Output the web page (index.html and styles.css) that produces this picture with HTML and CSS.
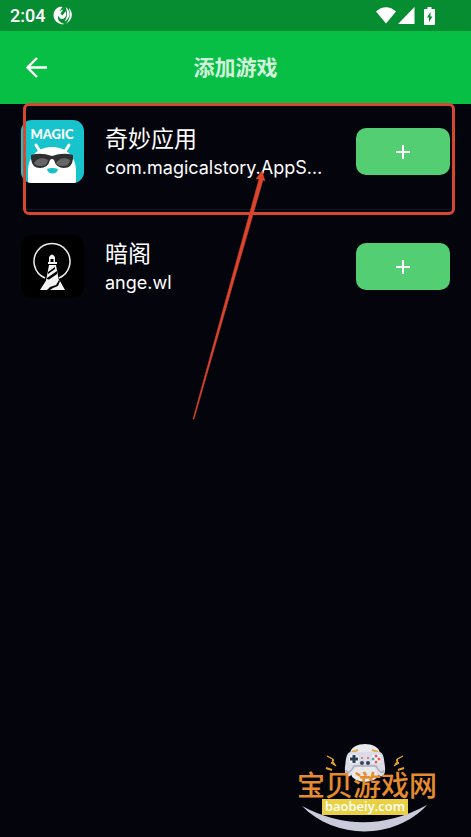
FILE: index.html
```html
<!DOCTYPE html>
<html lang="zh-CN">

<head>
  <meta charset="utf-8">
  <meta name="viewport" content="width=device-width, initial-scale=1">
  <title>添加游戏</title>
  <link rel="stylesheet" href="styles.css">
</head>

<body>

  <div class="status-bar">
    <span class="time">2:04</span>
    <svg class="notice" width="19" height="19" viewBox="0 0 18 18">
      <path d="M4 2C1 4-.3 8 1 11.500c1.500 4 6 6.500 10 5.500C6 16 4 13 5 9c1 3 3 4 5 3 3-2 3-5 2-7l-3 4-2-2 3-4-4 2 3-4C7 .5 5.500 1 4 2z" fill="#fff"/>
      <path d="M12 1c5 4 5 10-1 14 1-3 4-6 1-14zM15 2c5 5 3 12-3 15 4-4 5-9 3-15z" fill="#fff"/>
    </svg>
    <div class="signals">
      <svg width="20" height="17" viewBox="0 0 20 17"><path d="M0 4.500C6-1.200 14-1.200 20 4.500L10 16.500z" fill="#fff"/></svg>
      <svg width="17" height="17" viewBox="0 0 17 17"><path d="M0 17L16.500 0v17z" fill="#fff"/></svg>
      <svg class="battery" width="11" height="18" viewBox="0 0 11 18"><path fill-rule="evenodd" d="M3.500 0h4v2H10q1 0 1 1v14q0 1-1 1H1q-1 0-1-1V3q0-1 1-1h2.500zM6.500 5L3 10.500h2V15l3.500-5.500h-2z" fill="#fff"/></svg>
    </div>
  </div>

  <header class="top-bar">
    <button class="back" type="button" aria-label="返回">
      <svg width="21" height="21" viewBox="0 0 21 21"><path d="M11 1L1.500 10.500 11 20M1.500 10.500H21" fill="none" stroke="#fff" stroke-width="2.400"/></svg>
    </button>
    <h1>添加游戏</h1>
  </header>

  <main>
    <ul class="apps">
      <li class="app">
        <svg class="icon" viewBox="0 0 63 63">
          <rect width="63" height="63" fill="#17c4cc"/>
          <path d="M15 25l5 8M48 25l-5 8" stroke="#fff" stroke-width="3" stroke-linecap="round"/>
          <path d="M7 63V51C7 36 17 27 31 27s24 9 24 24v12z" fill="#fff"/>
          <path d="M10 35q10-3 21 1 11-4 21-1v4q-1 9-9 9-8 0-10-8-2-2-4 0-2 8-10 8-8 0-9-9z" fill="#2f2f31"/>
          <path d="M13 43c3-5 9-6 14-3-1 5-3 6-8 6-3 0-5-1-6-3zM35 43c3-5 9-6 14-3-1 5-3 6-8 6-3 0-5-1-6-3z" fill="#666"/>
          <path d="M26 49q5-2 11 0c-1 6-10 6-11 0z" fill="#17bfc7"/>
          <text class="icon-text" x="31" y="19" text-anchor="middle">MAGIC</text>
        </svg>
        <div class="info">
          <h2>奇妙应用</h2>
          <p class="package">com.magicalstory.AppS…</p>
        </div>
        <button class="add" type="button" aria-label="添加奇妙应用">
          <svg width="14" height="14" viewBox="0 0 14 14"><path d="M7 0v14M0 7h14" stroke="#fff" stroke-width="2"/></svg>
        </button>
      </li>
      <li class="app">
        <svg class="icon" viewBox="0 0 63 63">
          <rect width="63" height="63" fill="#000"/>
          <path d="M24 43A18 18 0 1 1 38 43" fill="none" stroke="#eee" stroke-width="1.500"/>
          <path d="M28 24v-2q3-5 6 0v2zM27 27h9v2h-9zM28 24h1.500v4H28zM32.500 24H34v4h-1.500zM28 30h7l3 16H25z" fill="#f2f2f2"/>
          <path d="M27 37l7-5v2l-7 5zM26 43l10-7v3l-10 7z" fill="#000"/>
          <path d="M19 55l7-11 3 1 6-3 4 4 5 9z" fill="#f2f2f2"/>
          <path d="M26 55l3-3 6-2 3-5 1 1-2 5-5 2-3 2z" fill="#000"/>
        </svg>
        <div class="info">
          <h2>暗阁</h2>
          <p class="package">ange.wl</p>
        </div>
        <button class="add" type="button" aria-label="添加暗阁">
          <svg width="14" height="14" viewBox="0 0 14 14"><path d="M7 0v14M0 7h14" stroke="#fff" stroke-width="2"/></svg>
        </button>
      </li>
    </ul>

    <!-- highlight of the first row -->
    <div class="highlight"></div>
    <svg class="arrow" width="74" height="250" viewBox="0 0 74 250">
      <path d="M70 1l3 10-2-1L2 249H1L67 9l-3 0z" fill="#db452e" stroke="#db452e" stroke-width=".5"/>
    </svg>
  </main>

  <svg class="watermark" width="165" height="102" viewBox="0 0 165 102">
    <path d="M17 71Q79 104 142 70C110 105 50 105 17 71z" fill="#c9cada"/>
    <path d="M65 18C67 6 93 6 95 18z" fill="#e8e8ef"/>
    <path d="M67 17l6-2M87 15l6 2" stroke="#e0ad48" stroke-width="2"/>
    <ellipse cx="80" cy="38" rx="14" ry="9" fill="#e9e8ea"/>
    <path d="M66 17h28c5 0 5 8 6 15 1 9-4 12-7 7l-4-7H71l-4 7c-3 5-8 2-7-7 1-7 1-15 6-15z" fill="#dcdce8"/>
    <path d="M61 35c1 4 4 3 8-4h22c4 7 7 8 8 4" fill="none" stroke="#aaaabd" stroke-width="1.500"/>
    <circle cx="69" cy="24" r="5" fill="#f4f4f8"/>
    <path d="M69 20v8M65 24h8" stroke="#294055" stroke-width="3"/>
    <circle cx="91" cy="24" r="5" fill="#f4f4f8"/>
    <circle cx="91" cy="21" r="1.500" fill="#e85a59"/>
    <circle cx="91" cy="27" r="1.500" fill="#e85a59"/>
    <circle cx="88" cy="24" r="1.500" fill="#3bb1c5"/>
    <circle cx="94" cy="24" r="1.500" fill="#e85a59"/>
    <circle cx="77" cy="28" r="2" fill="#344459"/>
    <circle cx="83" cy="28" r="2" fill="#344459"/>
    <path d="M76 23h2M82 23h2" stroke="#e85a59" stroke-width="1.500"/>
    <path d="M42 21l7 4-3 3 5 3-4-6 1-1zM118 21l-7 4 3 3-5 3 4-6-1-1z" fill="#e3a32a" stroke="#e3a32a"/>
    <path d="M41 33l6 2M119 33l-6 2" stroke="#e3a32a" stroke-width="2"/>
    <rect x="37" y="64" width="86" height="16" fill="#ead144"/>
    <text class="mark-name" x="82" y="61" text-anchor="middle">宝贝游戏网</text>
    <text class="mark-site" x="80" y="76" text-anchor="middle">baobeiy.com</text>
  </svg>

</body>

</html>
```
FILE: styles.css
```css
* {
  box-sizing: border-box;
}

body {
  position: relative;
  min-height: 100vh;
  margin: 0;
  background-color: #04040d;
  color: #fff;
  font-family: Inter, "Noto Sans CJK SC", sans-serif;
}

h1, h2, p, ul {
  margin: 0;
  padding: 0;
}

svg {
  display: block;
}

button {
  border: 0;
  padding: 0;
  color: #fff;
  cursor: pointer;
}

.status-bar {
  display: flex;
  align-items: center;
  height: 31px;
  padding: 0 36px 0 10px;
  background-color: #068d32;
}

.time {
  font: 500 18px/31px Roboto, sans-serif;
}

.notice {
  margin-left: 8px;
}

.signals {
  display: flex;
  align-items: center;
  gap: 2px;
  margin-left: auto;
}

.battery {
  margin-left: 7px;
}

.top-bar {
  display: grid;
  grid-template-columns: 48px 1fr 48px;
  align-items: center;
  height: 73px;
  padding: 0 12px;
  background-color: #08bf46;
}

.back {
  display: grid;
  place-items: center;
  height: 48px;
  background: none;
}

.top-bar h1 {
  color: #d3f2dc;
  font-size: 21px;
  font-weight: 700;
  line-height: 28px;
  text-align: center;
}

main {
  position: relative;
}

.apps {
  padding: 16px 21px 0;
  list-style: none;
}

.app {
  display: flex;
  align-items: center;
  padding-bottom: 26px;
}

.app + .app {
  padding-top: 25px;
  border-top: 1px solid #12151c;
}

.icon {
  flex: none;
  width: 63px;
  height: 63px;
  border-radius: 11px;
}

.icon-text {
  fill: #fff;
  font: 900 13px Lato, sans-serif;
}

.info {
  flex: 1;
  min-width: 0;
  padding: 0 16px 0 21px;
}

.info h2 {
  font-size: 23px;
  font-weight: 400;
  line-height: 32px;
}

.package {
  overflow: hidden;
  font-size: 18px;
  line-height: 26px;
  white-space: nowrap;
}

.add {
  display: grid;
  flex: none;
  place-items: center;
  width: 94px;
  height: 47px;
  border-radius: 10px;
  background-color: #53ce73;
}

.highlight {
  position: absolute;
  top: -1px;
  left: 23px;
  right: 16px;
  height: 112px;
  border: 3px solid #d5482f;
  border-radius: 6px;
  pointer-events: none;
}

.arrow {
  position: absolute;
  top: 66px;
  left: 192px;
  pointer-events: none;
}

.watermark {
  position: absolute;
  right: 21px;
  bottom: 0;
}

.mark-name {
  fill: #e58c2c;
  font: 500 28px "Noto Sans CJK SC", sans-serif;
}

.mark-site {
  fill: #fff;
  font: 600 13px "Open Sans", sans-serif;
}
```
